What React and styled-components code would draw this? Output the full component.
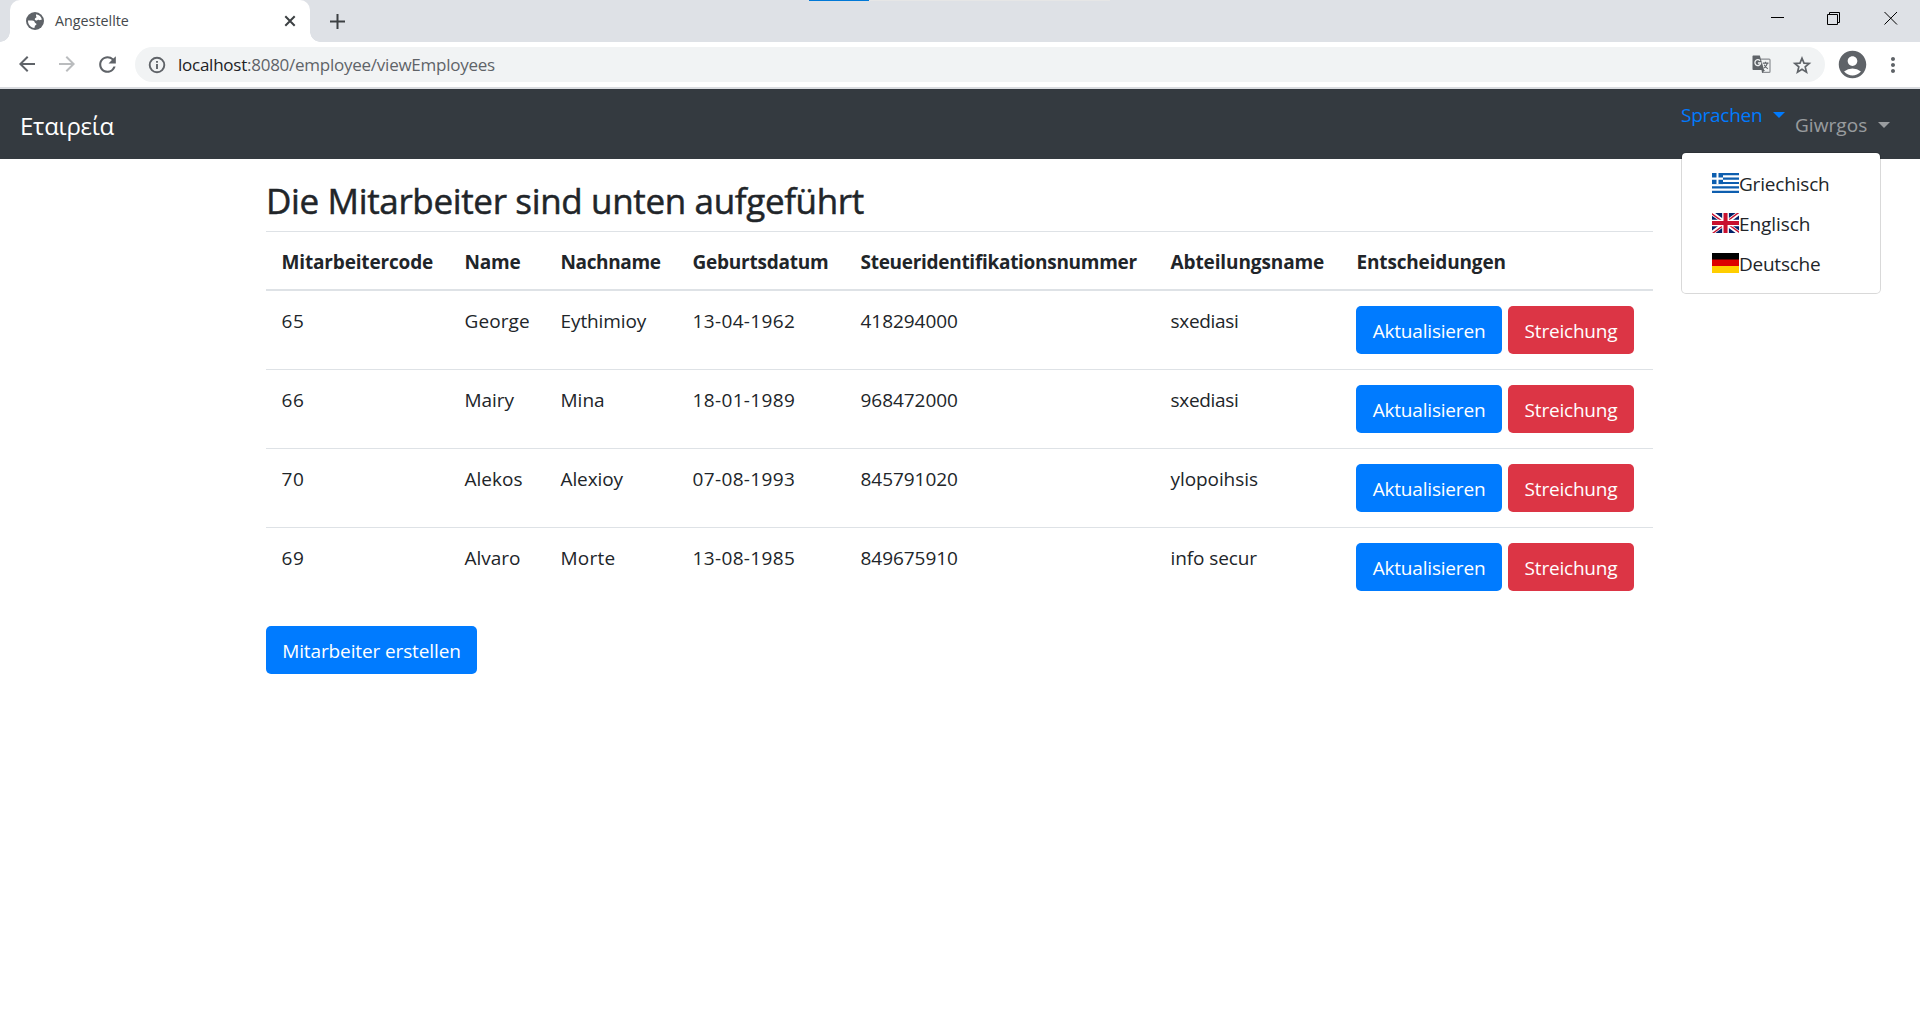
import React from 'react';
import styled, { createGlobalStyle } from 'styled-components';
import {
  MdAccountCircle, MdArrowBack, MdArrowForward, MdMoreVert, MdRefresh,
} from 'react-icons/md';

const GlobalStyle = createGlobalStyle`
  *, *::before, *::after { box-sizing: border-box; }
  body {
    margin: 0;
    background: #fff;
    color: #212529;
    font-family: "Open Sans", "Noto Sans", sans-serif;
    font-size: 19px;
    line-height: 30px;
    overflow: hidden;
  }
  svg { display: block; flex: none; }
`;

const Label = styled.span`
  letter-spacing: ${(p) => p.$ls || 0}px;
  white-space: nowrap;
`;

/* Browser window */
const Page = styled.div`
  display: flex;
  flex-direction: column;
  min-height: 1027px;
`;

const TabStrip = styled.div`
  position: relative;
  display: flex;
  align-items: center;
  height: 42px;
  padding-left: 10px;
  background: #dee1e6;
`;

const LoadTrack = styled.div`
  position: absolute;
  top: 0;
  left: 809px;
  width: 301px;
  height: 1px;
  background: linear-gradient(to right, #0078d7 60px, #e6e6e6 60px);
`;

const Tab = styled.div`
  position: relative;
  display: flex;
  align-items: center;
  width: 300px;
  height: 42px;
  padding: 0 14px 0 16px;
  background: #fff;
  border-radius: 10px 10px 0 0;
  color: #45494d;
  font-size: 14.3px;

  &::before, &::after {
    content: "";
    position: absolute;
    bottom: 0;
    width: 10px;
    height: 10px;
  }
  &::before { left: -10px; background: radial-gradient(circle at 0 0, transparent 9.5px, #fff 10px); }
  &::after { right: -10px; background: radial-gradient(circle at 100% 0, transparent 9.5px, #fff 10px); }
`;

const TabTitle = styled(Label)`
  flex: 1;
  margin-left: 11px;
  line-height: 20px;
`;

const NewTab = styled.div`
  margin-left: 19px;
`;

const WindowControls = styled.div`
  display: flex;
  align-items: center;
  gap: 43px;
  margin-left: auto;
  padding: 0 22px 6px 0;
`;

const Toolbar = styled.div`
  display: flex;
  align-items: center;
  height: 47px;
  padding: 0 0 0 15px;
  border-bottom: 2px solid #dadce0;
  background: #fff;
  color: #5f6368;
`;

const NavButtons = styled.div`
  display: flex;
  gap: 16px;
`;

const Faded = styled.span`
  color: #babcbe;
`;

const AddressBar = styled.div`
  display: flex;
  align-items: center;
  width: 1690px;
  height: 35px;
  margin-left: 15px;
  padding: 0 12px;
  border-radius: 18px;
  background: #f1f3f4;
  font-size: 17px;
`;

const Url = styled(Label)`
  flex: 1;
  margin-left: 11px;
`;

const Host = styled.span`
  color: #202124;
`;

const AddressActions = styled.div`
  display: flex;
  align-items: center;
  gap: 20px;
`;

const BrowserMenu = styled.div`
  display: flex;
  align-items: center;
  gap: 12px;
  margin-left: 11px;
`;

/* Application bar */
const Navbar = styled.nav`
  display: flex;
  align-items: center;
  height: 70px;
  padding: 1px 30px 0 20px;
  background: #343a40;
`;

const Brand = styled(Label)`
  flex: 1;
  padding-top: 2px;
  color: #fff;
  font-size: 24px;
`;

const LanguageMenu = styled.div`
  position: relative;
  display: flex;
  align-items: center;
  justify-content: space-between;
  width: 114px;
  margin-bottom: 20px;
  padding-right: 10px;
  color: #007bff;
`;

const UserMenu = styled.div`
  display: flex;
  align-items: center;
  justify-content: space-between;
  width: 95px;
  color: rgba(255, 255, 255, 0.5);
`;

const Caret = styled.span`
  border: 6px solid transparent;
  border-top-color: currentColor;
  border-bottom: 0;
`;

const Dropdown = styled.div`
  position: absolute;
  top: 52.5px;
  left: 0;
  width: 200px;
  padding: 10px 0;
  border: 1px solid rgba(0, 0, 0, 0.15);
  border-radius: 5px;
  background: #fff;
  background-clip: padding-box;
  color: #212529;
`;

const DropdownItem = styled.div`
  display: flex;
  align-items: center;
  height: 40px;
  padding: 0 30px;
`;

const LanguageName = styled(Label)`
  padding-top: 2px;
`;

/* Employee listing */
const Container = styled.main`
  width: 1387px;
  margin-left: 266px;
  padding-top: 21px;
`;

const Title = styled.h3`
  margin: 0 0 9px;
  font-size: 35px;
  font-weight: 500;
  line-height: 42px;
  -webkit-text-stroke: 0.5px #212529;
`;

const Table = styled.table`
  width: 100%;
  margin-bottom: 20px;
  border-collapse: separate;
  border-spacing: 0;
  table-layout: fixed;
`;

const Column = styled.col`
  width: ${(p) => p.$width}px;
`;

const HeadCell = styled.th`
  padding: 15px 0 12px 15.5px;
  border-top: 1px solid #dee2e6;
  border-bottom: 2px solid #dee2e6;
  font-weight: 700;
  text-align: left;
`;

const Cell = styled.td`
  padding: 15px 0 15px ${(p) => (p.$actions ? 15 : 15.5)}px;
  border-top: 1px solid #dee2e6;
  vertical-align: top;

  tr:first-child > & { border-top: 0; }
`;

const Actions = styled.div`
  display: flex;
  gap: 6px;
`;

const Button = styled.button`
  width: ${(p) => p.$width}px;
  height: 48px;
  padding: 1px 0 0;
  border: 0;
  border-radius: 5px;
  background: ${(p) => (p.$danger ? '#dc3545' : '#007bff')};
  color: #fff;
  font: inherit;
`;

const columns = [
  ['Mitarbeitercode', 183, -0.16],
  ['Name', 96, -0.19],
  ['Nachname', 132, -0.36],
  ['Geburtsdatum', 168, -0.23],
  ['Steueridentifikationsnummer', 310, -0.29],
  ['Abteilungsname', 186, -0.11],
  ['Entscheidungen', 312, -0.16],
];

const employees = [
  [['65', 0.6], ['George', 0.1], ['Eythimioy', -0.1], ['13-04-1962', 0.36], ['418294000', -0.04], ['sxediasi', -0.3]],
  [['66', 0.6], ['Mairy', -0.05], ['Mina', 0], ['18-01-1989', 0.36], ['968472000', -0.04], ['sxediasi', -0.3]],
  [['70', 0.6], ['Alekos', 0.02], ['Alexioy', -0.1], ['07-08-1993', 0.36], ['845791020', -0.04], ['ylopoihsis', -0.08]],
  [['69', 0.6], ['Alvaro', 0], ['Morte', 0.24], ['13-08-1985', 0.36], ['849675910', -0.04], ['info secur', -0.1]],
];

const GlobeIcon = () => (
  <svg width="18" height="18" viewBox="0 0 18 18">
    <circle cx="9" cy="9" r="9" fill="#5f6368" />
    <path
      fill="#fff"
      d="M10.2 2.2c3 .5 5.2 2.6 5.700 5.300l-1.600.6c-.8.300-1.300-.6-2.200-.4-.9.200-1 1-1.900.8-1.200-.300-1.900-1.200-1.200-2.100.5-.7 1.500-.5 1.500-1.300 0-1-1-1.100-.300-2.900z"
    />
    <path
      fill="#fff"
      d="M2 8.600h4.100c1.800 0 2.500.9 2.700 1.900.2.9 1.800.7 1.700 1.800-.1 1-1.500.9-1.700 1.900-.1.700-.1 1.400-.5 1.900C4.700 15.700 1.800 12.500 2 8.600z"
    />
  </svg>
);

const InfoIcon = () => (
  <svg width="20" height="20" viewBox="0 0 20 20" fill="none" stroke="currentColor" strokeWidth="1.900">
    <circle cx="10" cy="10" r="7.300" />
    <path d="M10 9v5M10 5.900v1.900" />
  </svg>
);

const StarIcon = () => (
  <svg width="22" height="22" viewBox="0 0 22 22" fill="none" stroke="currentColor" strokeWidth="1.700">
    <path d="M11 4.200l2 4.900 5.200.4-4 3.400 1.300 5.200L11 15.300l-4.500 2.800 1.300-5.200-4-3.400 5.200-.4z" />
  </svg>
);

const TranslateIcon = () => (
  <svg width="19" height="19" viewBox="0 0 19 19" fill="none">
    <path d="M8.500 4.100h8.600c.5 0 .9.4.9.9v11.500c0 .5-.4.900-.9.900H10" stroke="#8b8e92" strokeWidth="1.200" />
    <path d="M1.500.500h6.300l4.300 14.500H1.500c-.600 0-1-.400-1-1v-12.500c0-.600.400-1 1-1z" fill="#5f6368" />
    <path d="M9.500 15h3.600l-3 3z" fill="#5f6368" />
    <path d="M8 5.700A2.900 2.900 0 1 0 8.700 8H5.900" stroke="#f1f3f4" strokeWidth="1.300" />
    <path d="M10.800 8.100h5.700M13.500 6.700v1.400M15.300 8.300c-.4 2-1.800 3.600-3.500 4.800M12.200 9.800c.8 1.700 2.200 3.100 3.600 4" stroke="#5f6368" strokeWidth="1.100" />
  </svg>
);

const GreekFlag = () => (
  <svg width="27" height="20" viewBox="0 0 27 18" preserveAspectRatio="none">
    <path fill="#fff" d="M0 0h27v18H0z" />
    <path fill="#0d5eaf" d="M0 0h27v2H0zM0 4h27v2H0zM0 8h27v2H0zM0 12h27v2H0zM0 16h27v2H0z" />
    <path fill="#0d5eaf" d="M0 0h11v10H0z" />
    <path fill="#fff" d="M4.5 0h2v10h-2zM0 4h11v2H0z" />
  </svg>
);

const BritishFlag = () => (
  <svg width="27" height="20" viewBox="0 0 640 480" preserveAspectRatio="none">
    <path fill="#012169" d="M0 0h640v480H0z" />
    <path fill="#fff" d="m75 0 244 181L562 0h78v62L400 241l240 178v61h-80L320 301 81 480H0v-60l239-178L0 64V0z" />
    <path fill="#c8102e" d="m424 281 216 159v40L369 281zm-184 20 6 35L54 480H0zM640 0v3L391 191l2-44L590 0zM0 0l239 176h-60L0 42z" />
    <path fill="#fff" d="M241 0v480h160V0zM0 160v160h640V160z" />
    <path fill="#c8102e" d="M0 193v96h640v-96zM273 0v480h96V0z" />
  </svg>
);

const GermanFlag = () => (
  <svg width="27" height="20" viewBox="0 0 27 20">
    <path fill="#000" d="M0 0h27v7H0z" />
    <path fill="#d00" d="M0 6.5h27V13H0z" />
    <path fill="#ffce00" d="M0 13h27v7H0z" />
  </svg>
);

const languages = [
  ['Griechisch', -0.19, GreekFlag],
  ['Englisch', -0.08, BritishFlag],
  ['Deutsche', -0.25, GermanFlag],
];

export default function App() {
  return (
    <Page>
      <GlobalStyle />
      <TabStrip>
        <LoadTrack />
        <Tab>
          <GlobeIcon />
          <TabTitle>Angestellte</TabTitle>
          <svg width="12" height="12" viewBox="0 0 12 12" stroke="#3c4043" strokeWidth="2">
            <path d="M1.3 1.3l9.4 9.4M10.7 1.3L1.3 10.7" />
          </svg>
        </Tab>
        <NewTab>
          <svg width="17" height="17" viewBox="0 0 17 17" stroke="#3c4043" strokeWidth="2">
            <path d="M8.5 1v15M1 8.5h15" />
          </svg>
        </NewTab>
        <WindowControls>
          <svg width="14" height="14" viewBox="0 0 14 14" stroke="#000">
            <path d="M1 6.5h13" />
          </svg>
          <svg width="14" height="14" viewBox="0 0 14 14" stroke="#000" fill="none">
            <path d="M.5 3.500h10v10h-10zM2.500 3.500v-2h10v10h-2" />
          </svg>
          <svg width="14" height="14" viewBox="0 0 14 14" stroke="#000">
            <path d="M.5 1l12.5 12.5M13 1L.5 13.5" />
          </svg>
        </WindowControls>
      </TabStrip>
      <Toolbar>
        <NavButtons>
          <MdArrowBack size={24} />
          <Faded><MdArrowForward size={24} /></Faded>
          <MdRefresh size={25} />
        </NavButtons>
        <AddressBar>
          <InfoIcon />
          <Url $ls={-0.25}><Host>localhost</Host>:8080/employee/viewEmployees</Url>
          <AddressActions>
            <TranslateIcon />
            <StarIcon />
          </AddressActions>
        </AddressBar>
        <BrowserMenu>
          <MdAccountCircle size={33} />
          <MdMoreVert size={24} />
        </BrowserMenu>
      </Toolbar>
      <Navbar>
        <Brand $ls={-0.28}>Εταιρεία</Brand>
        <LanguageMenu>
          <Label $ls={-0.25}>Sprachen</Label>
          <Caret />
          <Dropdown>
            {languages.map(([name, ls, Flag]) => (
              <DropdownItem key={name}>
                <Flag />
                <LanguageName $ls={ls}>{name}</LanguageName>
              </DropdownItem>
            ))}
          </Dropdown>
        </LanguageMenu>
        <UserMenu>
          <Label $ls={0.05}>Giwrgos</Label>
          <Caret />
        </UserMenu>
      </Navbar>
      <Container>
        <Title><Label $ls={-0.35}>Die Mitarbeiter sind unten aufgeführt</Label></Title>
        <Table>
          <colgroup>
            {columns.map(([name, width]) => <Column key={name} $width={width} />)}
          </colgroup>
          <thead>
            <tr>
              {columns.map(([name, , ls]) => (
                <HeadCell key={name}><Label $ls={ls}>{name}</Label></HeadCell>
              ))}
            </tr>
          </thead>
          <tbody>
            {employees.map((row) => (
              <tr key={row[0][0]}>
                {row.map(([text, ls], i) => (
                  <Cell key={i}><Label $ls={ls}>{text}</Label></Cell>
                ))}
                <Cell $actions>
                  <Actions>
                    <Button $width={146}><Label $ls={-0.19}>Aktualisieren</Label></Button>
                    <Button $width={126} $danger><Label $ls={-0.2}>Streichung</Label></Button>
                  </Actions>
                </Cell>
              </tr>
            ))}
          </tbody>
        </Table>
        <Button $width={211}><Label $ls={-0.12}>Mitarbeiter erstellen</Label></Button>
      </Container>
    </Page>
  );
}
